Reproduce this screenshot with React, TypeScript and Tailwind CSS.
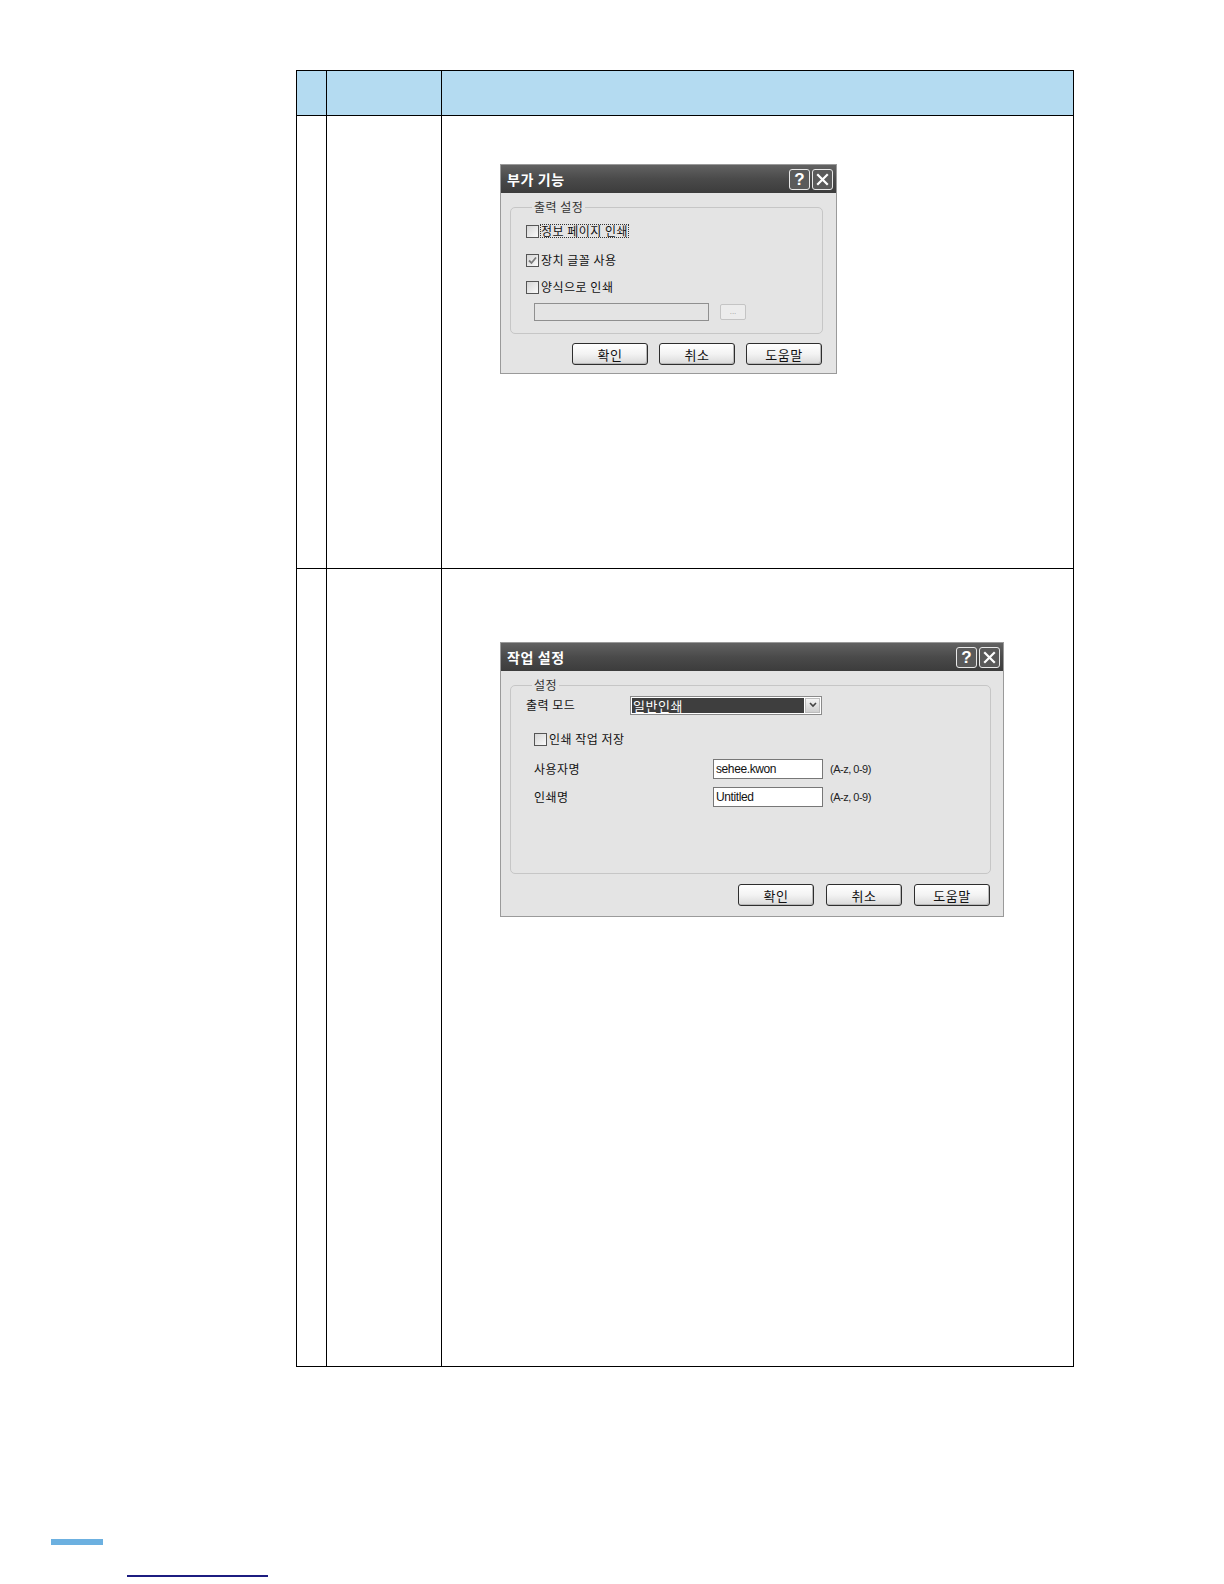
import React from "react";

const KR = "font-['Noto_Sans_CJK_KR',sans-serif]";

function TitleButton({ children }: { children: React.ReactNode }) {
  return (
    <div className="w-[21px] h-[21px] rounded-[3px] border border-[#e8e8e8] bg-[#5a5a5a] flex items-center justify-center text-white">
      {children}
    </div>
  );
}

function TitleBar({ title }: { title: string }) {
  return (
    <div className="h-[28px] flex items-center justify-between pl-[6px] pr-[3px] bg-gradient-to-b from-[#626262] via-[#4a4a4a] to-[#3c3c3c]">
      <span className={`${KR} text-[14px] font-bold text-white leading-none tracking-[0.6px]`}>{title}</span>
      <div className="flex gap-[2px]">
        <TitleButton>
          <span className="font-['Liberation_Sans',sans-serif] text-[17px] font-bold leading-none">?</span>
        </TitleButton>
        <TitleButton>
          <svg width="13" height="13" viewBox="0 0 13 13">
            <path d="M2 2 L11 11 M11 2 L2 11" stroke="white" strokeWidth="2.2" strokeLinecap="square" />
          </svg>
        </TitleButton>
      </div>
    </div>
  );
}

function CheckBox({ checked = false }: { checked?: boolean }) {
  return (
    <div className="w-[13px] h-[13px] border border-[#555] bg-gradient-to-br from-[#d6d6d6] to-[#fafafa] flex items-center justify-center shrink-0">
      {checked && (
        <svg width="9" height="9" viewBox="0 0 9 9">
          <path d="M1 4.5 L3.5 7 L8 1.5" stroke="#7a7a7a" strokeWidth="1.8" fill="none" />
        </svg>
      )}
    </div>
  );
}

function Button({ label }: { label: string }) {
  return (
    <div
      className={`${KR} w-[76px] h-[22px] rounded-[3px] border border-[#2e2e2e] bg-gradient-to-b from-[#ffffff] via-[#f3f3f3] to-[#d9d9d9] flex items-center justify-center text-[13px] tracking-[0.5px] text-[#111] leading-none shadow-[inset_-1px_-1px_0_#b8b8b8]`}
    >
      {label}
    </div>
  );
}

const label = `${KR} text-[12px] leading-none tracking-[0.5px] text-[#111]`;

function OptionsDialog() {
  return (
    <div className="w-[337px] h-[210px] border border-[#9a9a9a] bg-[#e4e4e4]">
      <TitleBar title="부가 기능" />
      <div className="pl-[9px] pr-[13px]">
        <fieldset className="mt-[7px] h-[134px] border border-[#c6c6c6] rounded-[5px] pl-[15px]">
          <legend className={`${KR} ml-[6px] px-[2px] text-[12px] leading-[14px] tracking-[0.5px] text-[#333]`}>출력 설정</legend>
          <div className="flex flex-col pt-[9px]">
            <div className="h-[16px] flex items-center gap-[2px]">
              <CheckBox />
              <span className={`${label} outline outline-1 outline-dotted outline-[#333]`}>정보 페이지 인쇄</span>
            </div>
            <div className="h-[16px] mt-[13px] flex items-center gap-[2px]">
              <CheckBox checked />
              <span className={label}>장치 글꼴 사용</span>
            </div>
            <div className="h-[16px] mt-[11px] flex items-center gap-[2px]">
              <CheckBox />
              <span className={label}>양식으로 인쇄</span>
            </div>
            <div className="mt-[8px] ml-[8px] flex items-center gap-[11px]">
              <div className="w-[175px] h-[18px] border border-[#8f8f8f] bg-[#e4e4e4]" />
              <div className="w-[26px] h-[16px] rounded-[2px] border border-[#c4c4c4] bg-[#ececec] flex items-center justify-center text-[8px] text-[#999] leading-none font-['Liberation_Sans',sans-serif]">
                ...
              </div>
            </div>
          </div>
        </fieldset>
        <div className="mt-[9px] flex justify-end gap-[11px] pr-[1px]">
          <Button label="확인" />
          <Button label="취소" />
          <Button label="도움말" />
        </div>
      </div>
    </div>
  );
}

function TextBox({ value }: { value: string }) {
  return (
    <div className="w-[110px] h-[20px] border border-[#777] bg-white flex items-center px-[2px] font-['Liberation_Sans',sans-serif] text-[12px] tracking-[-0.4px] text-[#111] leading-none">
      {value}
    </div>
  );
}

function JobDialog() {
  return (
    <div className="w-[504px] h-[275px] border border-[#9a9a9a] bg-[#e4e4e4]">
      <TitleBar title="작업 설정" />
      <div className="pl-[9px] pr-[12px]">
        <fieldset className="mt-[7px] h-[196px] border border-[#c6c6c6] rounded-[5px] pl-[15px]">
          <legend className={`${KR} ml-[6px] px-[2px] text-[12px] leading-[14px] tracking-[0.5px] text-[#333]`}>설정</legend>
          <div className="flex flex-col">
            <div className="mt-[3px] h-[20px] flex items-center">
              <span className={`${label} w-[104px]`}>출력 모드</span>
              <div className="w-[192px] h-[19px] border border-[#8a8a8a] bg-white p-[1px] flex">
                <div className={`${KR} flex-1 bg-[#3e3e3e] text-white text-[13px] tracking-[0.5px] leading-none flex items-center pl-[1px]`}>일반인쇄</div>
                <div className="w-[15px] ml-[1px] bg-gradient-to-b from-[#f4f4f4] to-[#cfcfcf] border border-[#bdbdbd] flex items-center justify-center">
                  <svg width="8" height="6" viewBox="0 0 8 6">
                    <path d="M1 1 L4 4 L7 1" stroke="#444" strokeWidth="1.6" fill="none" />
                  </svg>
                </div>
              </div>
            </div>
            <div className="mt-[16px] ml-[8px] h-[16px] flex items-center gap-[2px]">
              <CheckBox />
              <span className={label}>인쇄 작업 저장</span>
            </div>
            <div className="mt-[12px] ml-[8px] h-[20px] flex items-center">
              <span className={`${label} w-[179px]`}>사용자명</span>
              <TextBox value="sehee.kwon" />
              <span className="ml-[7px] font-['Liberation_Sans',sans-serif] text-[11px] tracking-[-0.5px] text-[#222] leading-none">(A-z, 0-9)</span>
            </div>
            <div className="mt-[8px] ml-[8px] h-[20px] flex items-center">
              <span className={`${label} w-[179px]`}>인쇄명</span>
              <TextBox value="Untitled" />
              <span className="ml-[7px] font-['Liberation_Sans',sans-serif] text-[11px] tracking-[-0.5px] text-[#222] leading-none">(A-z, 0-9)</span>
            </div>
          </div>
        </fieldset>
        <div className="mt-[10px] flex justify-end gap-[12px] pr-[1px]">
          <Button label="확인" />
          <Button label="취소" />
          <Button label="도움말" />
        </div>
      </div>
    </div>
  );
}

export default function App() {
  return (
    <div className="w-[1224px] h-[1584px] bg-white pt-[70px] overflow-hidden">
      <div className="ml-[296px] w-[778px] border border-black">
        <div className="flex h-[45px] bg-[#b4dbf1] border-b border-black">
          <div className="w-[30px] border-r border-black" />
          <div className="w-[115px] border-r border-black" />
          <div className="flex-1" />
        </div>
        <div className="flex h-[453px] border-b border-black">
          <div className="w-[30px] border-r border-black" />
          <div className="w-[115px] border-r border-black" />
          <div className="flex-1 pl-[58px] pt-[48px]">
            <OptionsDialog />
          </div>
        </div>
        <div className="flex h-[797px]">
          <div className="w-[30px] border-r border-black" />
          <div className="w-[115px] border-r border-black" />
          <div className="flex-1 pl-[58px] pt-[73px]">
            <JobDialog />
          </div>
        </div>
      </div>
      <div className="mt-[172px] ml-[51px] w-[52px] h-[6px] bg-[#6cb0e0]" />
      <div className="mt-[30px] ml-[127px] w-[141px] h-[2px] bg-[#1c1c80]" />
    </div>
  );
}
